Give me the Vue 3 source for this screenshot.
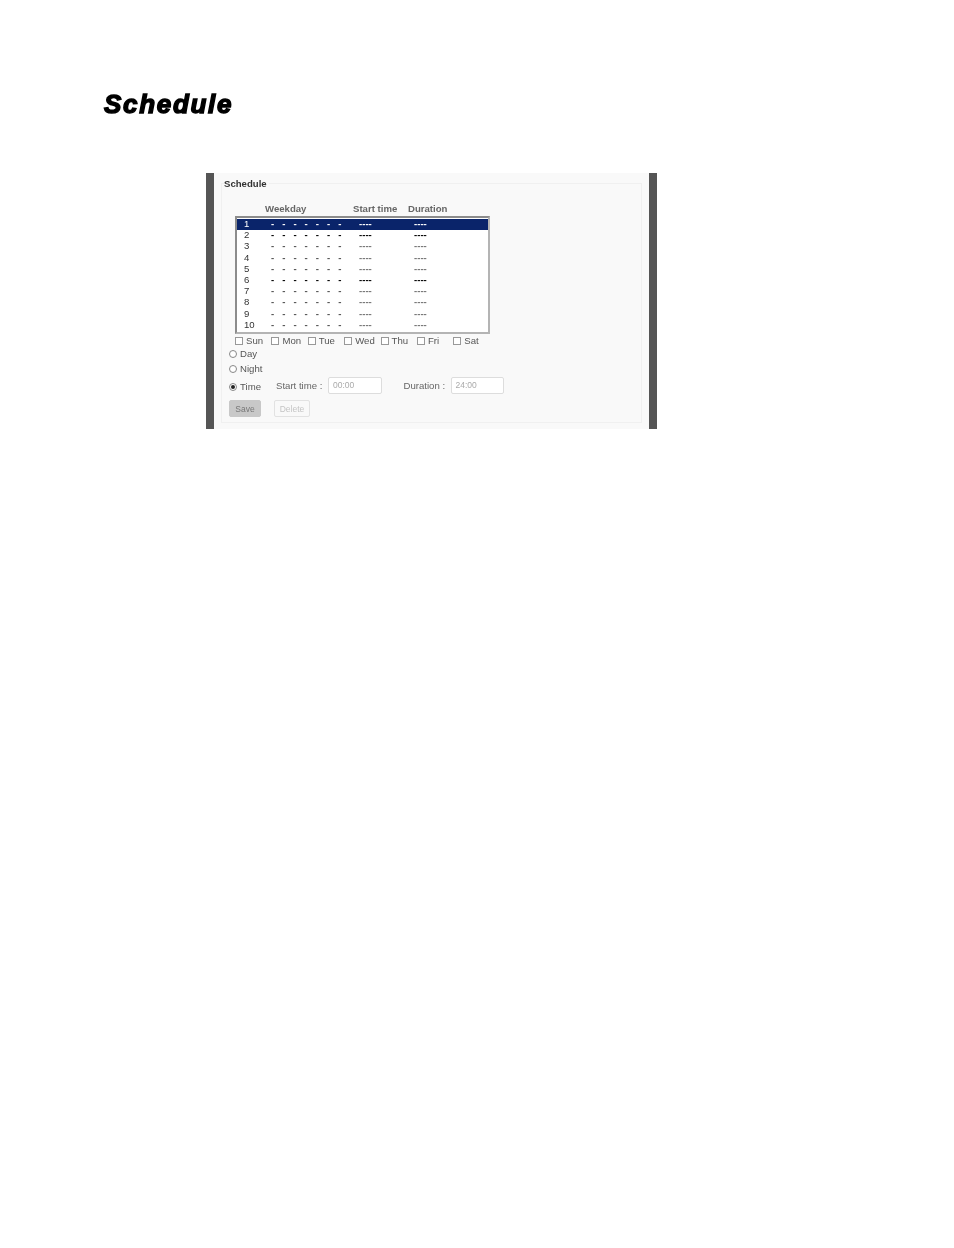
<script setup>
const rows = [1, 2, 3, 4, 5, 6, 7, 8, 9, 10]
const days = ['Sun', 'Mon', 'Tue', 'Wed', 'Thu', 'Fri', 'Sat']
const dashes = 7
</script>

<template>
  <div class="page">
    <h1 class="title">Schedule</h1>
    <div class="panel">
      <div class="fieldset">
        <div class="legend">Schedule</div>
        <div class="list-head">
          <span class="head-week">Weekday</span>
          <span class="head-start">Start time</span>
          <span class="head-dur">Duration</span>
        </div>
        <div class="list">
          <div
            v-for="r in rows"
            :key="r"
            class="row"
            :class="{ selected: r === 1, dark: r === 2 || r === 6 }"
          >
            <span class="num">{{ r }}</span>
            <span class="dashes"><span v-for="d in dashes" :key="d" class="dash">-</span></span>
            <span class="start">----</span>
            <span class="dur">----</span>
          </div>
        </div>
        <div class="days">
          <label v-for="d in days" :key="d" class="day">
            <span class="check"></span>{{ d }}
          </label>
        </div>
        <div class="mode mode-day"><span class="radio"></span>Day</div>
        <div class="mode mode-night"><span class="radio"></span>Night</div>
        <div class="time-row">
          <div class="mode mode-time"><span class="radio on"></span>Time</div>
          <span class="lbl-start">Start time :</span>
          <span class="input">00:00</span>
          <span class="lbl-dur">Duration :</span>
          <span class="input">24:00</span>
        </div>
        <div class="buttons">
          <button class="btn-save">Save</button>
          <button class="btn-delete">Delete</button>
        </div>
      </div>
    </div>
  </div>
</template>

<style scoped>
.page {
  width: 954px;
  height: 1248px;
  background: #fff;
  padding: 89px 0 0 104px;
  box-sizing: border-box;
  font-family: "Liberation Sans", Arial, sans-serif;
  overflow: hidden;
}

.title {
  margin: 0 0 53px;
  font-size: 26px;
  line-height: 31px;
  font-weight: 700;
  font-style: italic;
  color: #000;
  -webkit-text-stroke: 1.4px #000;
  letter-spacing: 1.7px;
  filter: blur(0.2px);
}

.panel {
  width: 451px;
  height: 256px;
  margin-left: 102px;
  box-sizing: border-box;
  background: #f9f9f9;
  border-left: 8px solid #555;
  border-right: 8px solid #555;
  padding: 10px 7px 0 7px;
  font-size: 9.6px;
  color: #444;
  filter: blur(0.3px);
}

.fieldset {
  position: relative;
  height: 240px;
  box-sizing: border-box;
  border: 1px solid #f0f0f0;
  padding: 19px 0 0 7px;
}

.legend {
  position: absolute;
  left: 2px;
  top: -6px;
  padding-right: 2px;
  background: #f9f9f9;
  font-weight: 700;
  color: #333;
  line-height: 11px;
}

.list-head {
  display: flex;
  margin-left: 36px;
  height: 12px;
  line-height: 12px;
  font-weight: 700;
  color: #666;
}

.head-week {
  width: 88px;
}

.head-start {
  width: 55px;
}

.list {
  width: 255px;
  height: 118px;
  margin: 1px 0 0 6px;
  box-sizing: border-box;
  border: 2px solid #b4b4b4;
  border-top-color: #8c8c8c;
  border-left-color: #8c8c8c;
  background: #fff;
  padding: 1px 0 0;
}

.row {
  display: flex;
  height: 11.2px;
  line-height: 10px;
  padding-left: 7px;
  color: #333;
}

.row.selected {
  background: #0a246a;
  color: #fff;
}

.num {
  width: 27px;
}

.dashes {
  display: flex;
  width: 88px;
  color: #555;
}

.row.dark .dashes,
.row.dark .start,
.row.dark .dur {
  color: #000;
}

.row.selected .dashes {
  color: #fff;
}

.dash {
  width: 11.2px;
  font-weight: 700;
}

.start {
  width: 55px;
  font-weight: 700;
  color: #777;
}

.dur {
  font-weight: 700;
  color: #777;
}

.row.selected .start,
.row.selected .dur {
  color: #fff;
}

.days {
  display: flex;
  margin: 1px 0 0 6px;
  height: 11px;
  line-height: 11px;
}

.day {
  width: 36.4px;
  display: flex;
  align-items: center;
  color: #555;
}

.check {
  width: 6px;
  height: 6px;
  margin-right: 3px;
  border: 1px solid #999;
  background: #fff;
  flex-shrink: 0;
}

.mode {
  display: flex;
  align-items: center;
  color: #555;
  line-height: 11px;
}

.mode-day {
  margin-top: 2px;
}

.mode-night {
  margin-top: 4px;
}

.radio {
  width: 6px;
  height: 6px;
  margin-right: 3px;
  border: 1px solid #888;
  border-radius: 50%;
  background: #fff;
  flex-shrink: 0;
  position: relative;
}

.radio.on::after {
  content: "";
  position: absolute;
  left: 1px;
  top: 1px;
  width: 4px;
  height: 4px;
  border-radius: 50%;
  background: #222;
}

.time-row {
  display: flex;
  align-items: center;
  height: 17px;
  margin-top: 3px;
}

.mode-time {
  width: 47px;
  margin-top: 2px;
}

.lbl-start {
  width: 52px;
  color: #666;
}

.lbl-dur {
  width: 47px;
  margin-left: 22px;
  color: #666;
}

.input {
  width: 53.5px;
  height: 17px;
  box-sizing: border-box;
  border: 1px solid #ddd;
  border-radius: 2px;
  background: #fff;
  padding-left: 4px;
  font-size: 8.5px;
  line-height: 15px;
  color: #aaa;
}

.buttons {
  display: flex;
  gap: 13px;
  margin-top: 6px;
}

.btn-save,
.btn-delete {
  height: 17px;
  padding: 0;
  border-radius: 2px;
  font: 8.5px "Liberation Sans", Arial, sans-serif;
}

.btn-save {
  width: 32px;
  background: #c8c8c8;
  border: 1px solid #c8c8c8;
  color: #777;
}

.btn-delete {
  width: 36px;
  background: #f9f9f9;
  border: 1px solid #e2e2e2;
  color: #c4c4c4;
}
</style>
